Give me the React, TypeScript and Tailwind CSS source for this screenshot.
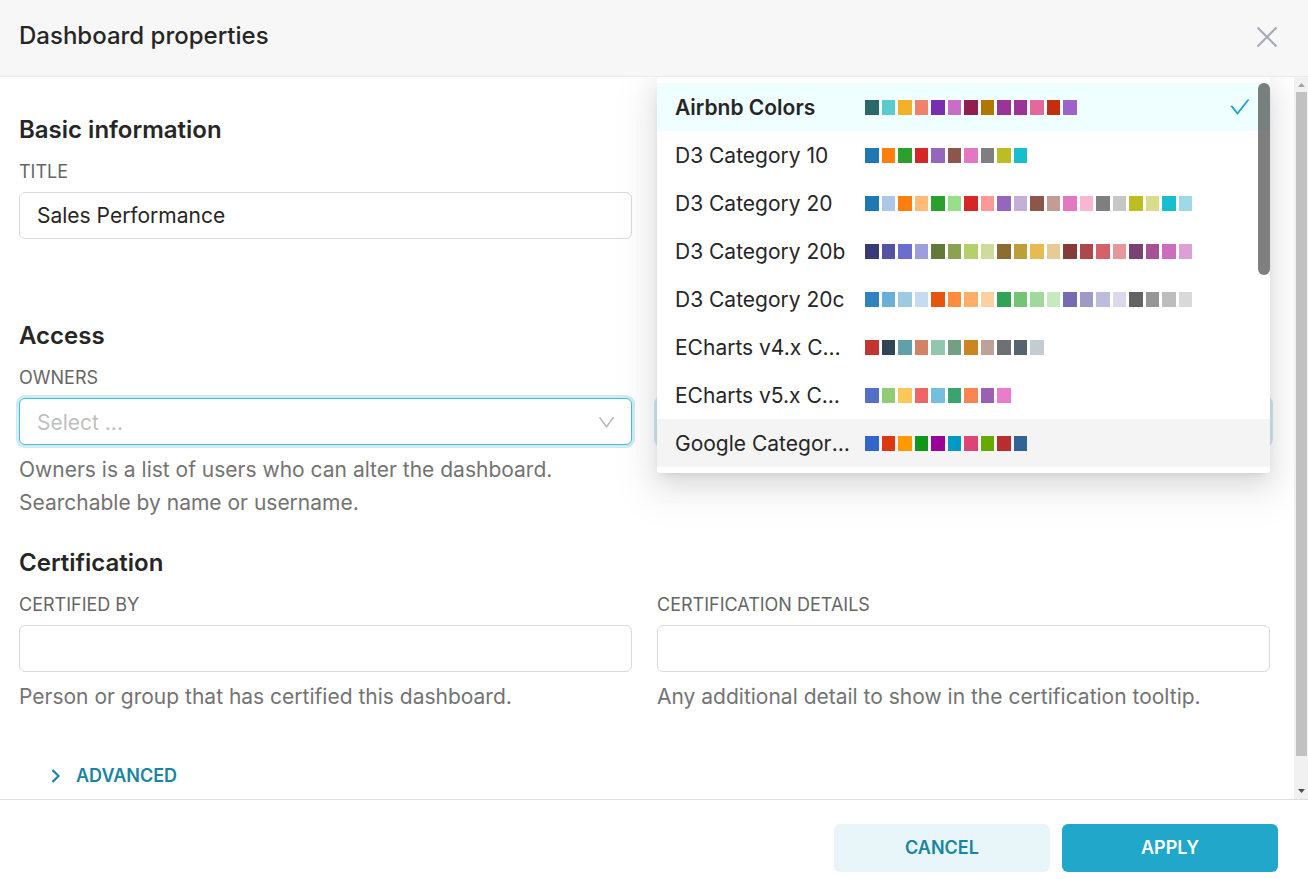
import React from 'react';
import { AiOutlineCheck, AiOutlineDown } from 'react-icons/ai';

type Scheme = { name: string; colors: string[]; selected?: boolean; active?: boolean };

const hex = (list: string) => list.split(' ').map((value) => `#${value}`);

const schemes: Scheme[] = [
  {
    name: 'Airbnb Colors',
    selected: true,
    colors: hex('29696b 5bcace f4b02a f1826a 792eb2 c96ec6 921e50 b27700 9c3498 9c3498 e4679d c32f0e 9d63ca'),
  },
  {
    name: 'D3 Category 10',
    colors: hex('1f77b4 ff7f0e 2ca02c d62728 9467bd 8c564b e377c2 7f7f7f bcbd22 17becf'),
  },
  {
    name: 'D3 Category 20',
    colors: hex(
      '1f77b4 aec7e8 ff7f0e ffbb78 2ca02c 98df8a d62728 ff9896 9467bd c5b0d5 8c564b c49c94 e377c2 f7b6d2 7f7f7f c7c7c7 bcbd22 dbdb8d 17becf 9edae5',
    ),
  },
  {
    name: 'D3 Category 20b',
    colors: hex(
      '393b79 5254a3 6b6ecf 9c9ede 637939 8ca252 b5cf6b cedb9c 8c6d31 bd9e39 e7ba52 e7cb94 843c39 ad494a d6616b e7969c 7b4173 a55194 ce6dbd de9ed6',
    ),
  },
  {
    name: 'D3 Category 20c',
    colors: hex(
      '3182bd 6baed6 9ecae1 c6dbef e6550d fd8d3c fdae6b fdd0a2 31a354 74c476 a1d99b c7e9c0 756bb1 9e9ac8 bcbddc dadaeb 636363 969696 bdbdbd d9d9d9',
    ),
  },
  {
    name: 'ECharts v4.x Colors',
    colors: hex('c23531 2f4554 61a0a8 d48265 91c7ae 749f83 ca8622 bda29a 6e7074 546570 c4ccd3'),
  },
  {
    name: 'ECharts v5.x Colors',
    colors: hex('5470c6 91cc75 fac858 ee6666 73c0de 3ba272 fc8452 9a60b4 ea7ccc'),
  },
  {
    name: 'Google Category 10c',
    active: true,
    colors: hex('3366cc dc3912 ff9900 109618 990099 0099c6 dd4477 66aa00 b82e2e 316395'),
  },
];

function SectionTitle({ children }: { children: React.ReactNode }) {
  return <h2 className="text-2xl leading-8 font-semibold">{children}</h2>;
}

function Label({ htmlFor, children }: { htmlFor: string; children: React.ReactNode }) {
  return (
    <label htmlFor={htmlFor} className="mb-[5px] block text-lg leading-[30px] text-[#666666] uppercase">
      {children}
    </label>
  );
}

function Help({ children }: { children: React.ReactNode }) {
  return <p className="mt-2 text-[21px] leading-[33px] text-[#737373]">{children}</p>;
}

const fieldClass =
  'block h-[47px] w-full rounded-md border border-[#d9d9e3] bg-white px-[17px] text-[21px] outline-none placeholder:text-[#bfbfbf]';
const focusedFieldClass =
  'block h-[47px] w-full rounded-md border border-[#45bed6] bg-white px-[17px] pt-0.5 text-[21px] ring-3 ring-[#d0ebf2] outline-none placeholder:text-[#bfbfbf]';

function SchemeOption({ scheme }: { scheme: Scheme }) {
  const tone = scheme.selected ? 'bg-[#effeff] font-semibold' : scheme.active ? 'bg-[#f4f4f4]' : '';
  return (
    <li
      role="option"
      aria-selected={Boolean(scheme.selected)}
      className={`flex h-12 items-center gap-[15px] px-[18px] text-[21px] ${tone}`}
    >
      <span className="w-[175px] shrink-0 truncate pt-0.5">{scheme.name}</span>
      <span className="grid w-[327px] shrink-0 grid-cols-20 gap-[3px]">
        {scheme.colors.map((color, index) => (
          <span key={index} className="h-[15px]" style={{ backgroundColor: color }} />
        ))}
      </span>
      {scheme.selected && <AiOutlineCheck className="ml-auto size-6 text-[#20a7c9]" />}
    </li>
  );
}

function SchemeMenu() {
  return (
    <div className="absolute inset-x-0 -bottom-7 z-10 rounded-[3px] bg-white py-1.5 shadow-[0_4px_9px_-6px_rgba(0,0,0,0.16),0_9px_24px_0_rgba(0,0,0,0.1),0_14px_42px_12px_rgba(0,0,0,0.06)]">
      <ul id="scheme-list" role="listbox" aria-label="Color scheme">
        {schemes.map((scheme) => (
          <SchemeOption key={scheme.name} scheme={scheme} />
        ))}
      </ul>
      <span className="absolute top-1.5 right-0 h-48 w-3 rounded-full bg-black/50" />
    </div>
  );
}

function PageScrollbar() {
  return (
    <div aria-hidden="true" className="flex w-3.5 shrink-0 flex-col items-center bg-[#f1f1f1]">
      <svg className="h-[15px] w-3.5 shrink-0" viewBox="0 0 14 15">
        <path d="M4 10h7L7.500 6z" fill="#a3a3a3" />
      </svg>
      <div className="mr-px ml-0.5 w-[11px] flex-1 bg-[#c1c1c1]" />
      <svg className="mt-7 h-[15px] w-3.5 shrink-0" viewBox="0 0 14 15">
        <path d="M4 5h7L7.500 9z" fill="#505050" />
      </svg>
    </div>
  );
}

export default function App() {
  return (
    <div className="flex h-screen flex-col overflow-hidden bg-white font-['Inter',sans-serif] text-[#262626]">
      <header className="flex shrink-0 items-start justify-between border-b border-[#ebebeb] bg-[#f7f7f7] pt-5 pr-[30px] pb-6 pl-[19px]">
        <h1 className="text-2xl leading-8 font-medium">Dashboard properties</h1>
        <button type="button" aria-label="Close" className="mt-1.5">
          <svg className="size-[22px]" viewBox="0 0 22 22" fill="none" stroke="#a6a9b9" strokeWidth="2">
            <path d="M1.500 1.500l19 19M20.500 1.500l-19 19" />
          </svg>
        </button>
      </header>

      <div className="flex min-h-0 flex-1">
        <main className="min-w-0 flex-1 overflow-hidden pt-[37px] pr-6 pl-[19px]">
          <section className="grid grid-cols-2 gap-x-[25px]">
            <div>
              <SectionTitle>Basic information</SectionTitle>
              <div className="mt-[11px]">
                <Label htmlFor="title">Title</Label>
                <input id="title" className={fieldClass} defaultValue="Sales Performance" />
              </div>
            </div>
          </section>

          <section className="mt-[81px] grid grid-cols-2 gap-x-[25px]">
            <div>
              <SectionTitle>Access</SectionTitle>
              <div className="mt-[11px]">
                <Label htmlFor="owners">Owners</Label>
                <div className="relative">
                  <input id="owners" role="combobox" aria-expanded="false" className={focusedFieldClass} placeholder="Select ..." />
                  <AiOutlineDown className="pointer-events-none absolute top-3.5 right-[15px] size-[21px] text-[#b8b8b8]" />
                </div>
                <Help>
                  Owners is a list of users who can alter the dashboard. Searchable by name or username.
                </Help>
              </div>
            </div>
            <div className="pt-[78px]">
              <div className="relative">
                <button
                  type="button"
                  role="combobox"
                  aria-label="Color scheme"
                  aria-expanded="true"
                  aria-controls="scheme-list"
                  className={focusedFieldClass}
                />
                <SchemeMenu />
              </div>
            </div>
          </section>

          <section className="mt-7">
            <SectionTitle>Certification</SectionTitle>
            <div className="mt-[11px] grid grid-cols-2 gap-x-[25px]">
              <div>
                <Label htmlFor="certified-by">Certified by</Label>
                <input id="certified-by" className={fieldClass} />
                <Help>Person or group that has certified this dashboard.</Help>
              </div>
              <div>
                <Label htmlFor="certification-details">Certification details</Label>
                <input id="certification-details" className={fieldClass} />
                <Help>Any additional detail to show in the certification tooltip.</Help>
              </div>
            </div>
          </section>

          <button
            type="button"
            className="mt-12 ml-8 flex items-center gap-[15px] text-lg leading-[30px] font-semibold text-[#1a85a0] uppercase"
          >
            <svg className="h-4 w-2.5" viewBox="0 0 10 16" fill="none" stroke="currentColor" strokeWidth="2.2">
              <path d="M1.500 2l6 6-6 6" />
            </svg>
            Advanced
          </button>
        </main>
        <PageScrollbar />
      </div>

      <footer className="flex shrink-0 justify-end gap-3 border-t border-[#dedede] pt-6 pr-[30px] pb-[7px] text-lg font-semibold">
        <button type="button" className="h-12 w-54 rounded-md bg-[#e8f5f9] text-[#1a85a0] uppercase">
          Cancel
        </button>
        <button type="button" className="h-12 w-54 rounded-md bg-[#20a7c9] text-white uppercase">
          Apply
        </button>
      </footer>
    </div>
  );
}
